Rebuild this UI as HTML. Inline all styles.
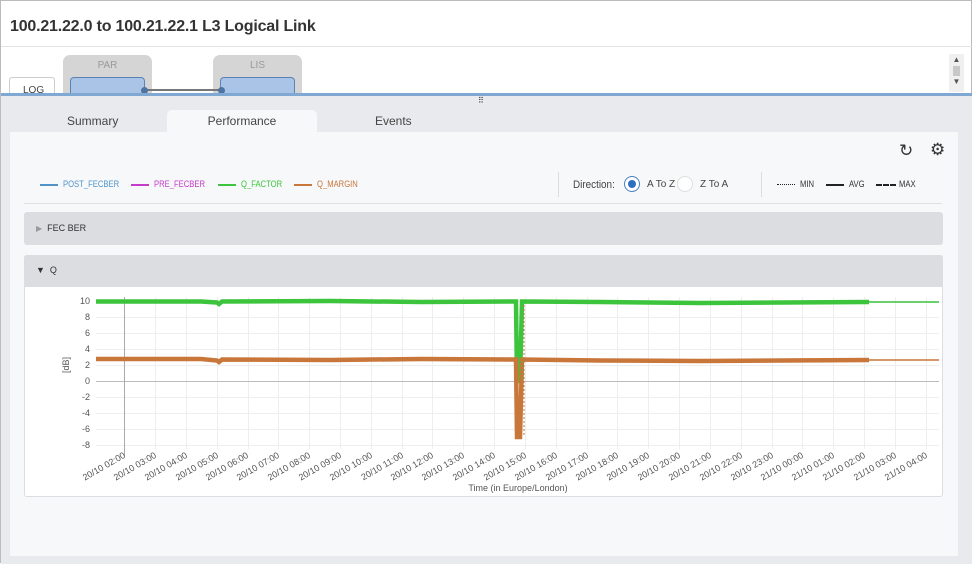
<!DOCTYPE html>
<html><head><meta charset="utf-8"><style>
*{box-sizing:border-box;margin:0;padding:0}
body{width:972px;height:563px;overflow:hidden;font-family:"Liberation Sans",sans-serif;background:#fff;position:relative;border:1px solid #bbb}
.abs{position:absolute}
.title{left:9px;top:17px;font-size:16px;font-weight:bold;color:#333;letter-spacing:-0.2px}
.t{font-size:11px;color:#444}
.lg{font-size:9px;transform:scaleX(0.85);transform-origin:left}
</style></head><body>
<div class="abs title">100.21.22.0 to 100.21.22.1 L3 Logical Link</div>
<div class="abs" style="left:0;top:45px;width:972px;height:1px;background:#e3e3e3"></div>
<!-- topology -->
<div class="abs" style="left:8px;top:76px;width:46px;height:20px;border:1px solid #ccc;border-radius:3px;background:#fff;font-size:10px;color:#444;padding:7px 0 0 13px">LOG</div>
<div class="abs" style="left:62px;top:54px;width:89px;height:40px;background:#d5d5d5;border-radius:7px 7px 0 0;text-align:center;font-size:10px;color:#999;padding-top:5px">PAR</div>
<div class="abs" style="left:69px;top:76px;width:75px;height:20px;background:#a9c4e6;border:1px solid #5b82b5;border-radius:4px"></div>
<div class="abs" style="left:212px;top:54px;width:89px;height:40px;background:#d5d5d5;border-radius:7px 7px 0 0;text-align:center;font-size:10px;color:#999;padding-top:5px">LIS</div>
<div class="abs" style="left:219px;top:76px;width:75px;height:20px;background:#a9c4e6;border:1px solid #5b82b5;border-radius:4px"></div>
<div class="abs" style="left:144px;top:88px;width:76px;height:2px;background:#777"></div>
<div class="abs" style="left:140px;top:86px;width:7px;height:7px;border-radius:50%;background:#4d74a3"></div>
<div class="abs" style="left:217px;top:86px;width:7px;height:7px;border-radius:50%;background:#4d74a3"></div>
<div class="abs" style="left:948px;top:53px;width:15px;height:38px;background:#f0f0f0;font-size:8px;color:#555;text-align:center;line-height:12px">▲<br><span style="display:block;height:10px;background:#c8c8c8;margin:0 4px"></span>▼</div>
<!-- lower area -->
<div class="abs" style="left:0;top:92px;width:972px;height:471px;background:#e9eaed;border-top:3px solid #7fa9d3"></div>
<div class="abs" style="left:477px;top:95px;font-size:8px;color:#333;letter-spacing:-1px">⠿</div>
<div class="abs t" style="left:66px;top:113px;font-size:12px;color:#444">Summary</div>
<div class="abs" style="left:166px;top:109px;width:150px;height:24px;background:#f7f8fa;border-radius:5px 5px 0 0;text-align:center;font-size:12px;color:#444;padding-top:4px">Performance</div>
<div class="abs t" style="left:374px;top:113px;font-size:12px;color:#444">Events</div>
<div class="abs" style="left:9px;top:131px;width:948px;height:424px;background:#f7f8fa"></div>
<!-- icons -->
<div class="abs" style="left:898px;top:140px;font-size:17px;color:#333">↻</div>
<div class="abs" style="left:929px;top:139px;font-size:17px;color:#333">⚙</div>
<!-- legend -->
<div class="abs" style="left:39px;top:183px;width:18px;height:2px;background:#4f93c9"></div><div class="abs lg" style="left:62px;top:178px;color:#4f93c9">POST_FECBER</div>
<div class="abs" style="left:130px;top:183px;width:18px;height:2px;background:#c53cc7"></div><div class="abs lg" style="left:153px;top:178px;color:#c53cc7">PRE_FECBER</div>
<div class="abs" style="left:217px;top:183px;width:18px;height:2px;background:#3ec43e"></div><div class="abs lg" style="left:240px;top:178px;color:#3ec43e">Q_FACTOR</div>
<div class="abs" style="left:293px;top:183px;width:18px;height:2px;background:#c8763a"></div><div class="abs lg" style="left:316px;top:178px;color:#c8763a">Q_MARGIN</div>
<div class="abs" style="left:557px;top:171px;width:1px;height:25px;background:#ddd"></div>
<div class="abs" style="left:572px;top:178px;font-size:11px;color:#444;transform:scaleX(0.9);transform-origin:left">Direction:</div>
<div class="abs" style="left:623px;top:175px;width:16px;height:16px;border-radius:50%;border:1px solid #4a7fc0;background:#fff"><div style="margin:3px;width:8px;height:8px;border-radius:50%;background:#2c6fbf"></div></div>
<div class="abs" style="left:646px;top:178px;font-size:10px;color:#444">A To Z</div>
<div class="abs" style="left:676px;top:175px;width:16px;height:16px;border-radius:50%;border:1px solid #ddd;background:#fff"></div>
<div class="abs" style="left:699px;top:178px;font-size:10px;color:#444">Z To A</div>
<div class="abs" style="left:760px;top:171px;width:1px;height:25px;background:#ddd"></div>
<div class="abs" style="left:776px;top:183px;width:18px;border-top:1px dotted #222"></div><div class="abs lg" style="left:799px;top:178px;color:#333">MIN</div>
<div class="abs" style="left:825px;top:183px;width:18px;height:2px;background:#222"></div><div class="abs lg" style="left:848px;top:178px;color:#333">AVG</div>
<div class="abs" style="left:875px;top:183px;width:20px;border-top:2px dashed #222"></div><div class="abs lg" style="left:898px;top:178px;color:#333">MAX</div>
<div class="abs" style="left:23px;top:202px;width:918px;height:1px;background:#e0e0e0"></div>
<!-- FEC BER -->
<div class="abs" style="left:23px;top:211px;width:919px;height:33px;background:#dcdde1;border-radius:3px;font-size:9px;color:#333;padding:11px 0 0 12px"><span style="color:#999;font-size:8px">▶</span>&nbsp; FEC BER</div>
<!-- Q -->
<div class="abs" style="left:23px;top:254px;width:919px;height:242px;background:#fff;border:1px solid #dcdde1;border-radius:3px"></div>
<div class="abs" style="left:23px;top:254px;width:919px;height:32px;background:#dcdde1;border-radius:3px 3px 0 0;font-size:9px;color:#333;padding:10px 0 0 12px"><span style="font-size:9px">▼</span>&nbsp; Q</div>
<svg class="abs" style="left:0;top:0" width="972" height="563">
<g stroke="#eee" stroke-width="1">
<line x1="95" x2="938" y1="300.5" y2="300.5"/><line x1="95" x2="938" y1="316.5" y2="316.5"/><line x1="95" x2="938" y1="332.5" y2="332.5"/><line x1="95" x2="938" y1="348.5" y2="348.5"/><line x1="95" x2="938" y1="364.5" y2="364.5"/><line x1="95" x2="938" y1="396.5" y2="396.5"/><line x1="95" x2="938" y1="412.5" y2="412.5"/><line x1="95" x2="938" y1="428.5" y2="428.5"/><line x1="95" x2="938" y1="444.5" y2="444.5"/>
<line x1="154.5" x2="154.5" y1="296" y2="448"/><line x1="185.5" x2="185.5" y1="296" y2="448"/><line x1="216.5" x2="216.5" y1="296" y2="448"/><line x1="247.5" x2="247.5" y1="296" y2="448"/><line x1="277.5" x2="277.5" y1="296" y2="448"/><line x1="308.5" x2="308.5" y1="296" y2="448"/><line x1="339.5" x2="339.5" y1="296" y2="448"/><line x1="370.5" x2="370.5" y1="296" y2="448"/><line x1="401.5" x2="401.5" y1="296" y2="448"/><line x1="431.5" x2="431.5" y1="296" y2="448"/><line x1="462.5" x2="462.5" y1="296" y2="448"/><line x1="493.5" x2="493.5" y1="296" y2="448"/><line x1="524.5" x2="524.5" y1="296" y2="448"/><line x1="555.5" x2="555.5" y1="296" y2="448"/><line x1="586.5" x2="586.5" y1="296" y2="448"/><line x1="616.5" x2="616.5" y1="296" y2="448"/><line x1="647.5" x2="647.5" y1="296" y2="448"/><line x1="678.5" x2="678.5" y1="296" y2="448"/><line x1="709.5" x2="709.5" y1="296" y2="448"/><line x1="740.5" x2="740.5" y1="296" y2="448"/><line x1="771.5" x2="771.5" y1="296" y2="448"/><line x1="801.5" x2="801.5" y1="296" y2="448"/><line x1="832.5" x2="832.5" y1="296" y2="448"/><line x1="863.5" x2="863.5" y1="296" y2="448"/><line x1="894.5" x2="894.5" y1="296" y2="448"/><line x1="925.5" x2="925.5" y1="296" y2="448"/>
</g>
<line x1="95" x2="938" y1="380.5" y2="380.5" stroke="#bbb"/>
<line x1="123.5" x2="123.5" y1="296" y2="455" stroke="#aaa"/>
<g font-size="9" fill="#555" text-anchor="end" font-family="Liberation Sans">
<text x="89" y="303">10</text><text x="89" y="319">8</text><text x="89" y="335">6</text><text x="89" y="351">4</text><text x="89" y="367">2</text><text x="89" y="383">0</text><text x="89" y="399">-2</text><text x="89" y="415">-4</text><text x="89" y="431">-6</text><text x="89" y="447">-8</text>
</g>
<text x="68" y="372" font-size="9" fill="#555" transform="rotate(-90 68 372)" font-family="Liberation Sans">[dB]</text>
<polyline fill="none" stroke="#3cc43c" stroke-width="4.5" points="95,300.5 200,300.5 216,301.5 218,303 221,300.5 330,300 420,301 515,300.5 516,380 519,380 521,300.5 600,301 700,302 868,301"/>
<line x1="868" x2="938" y1="301" y2="301" stroke="#3cc43c" stroke-width="1.5"/>
<polyline fill="none" stroke="#c8763a" stroke-width="4.5" points="95,358 200,358 216,359.5 218,361 221,358.5 330,359 420,358 515,358.5 516,436 519,436 521,358.5 600,359.5 700,360 868,359"/>
<line x1="868" x2="938" y1="359" y2="359" stroke="#c8763a" stroke-width="1.5"/>
<line x1="523" x2="523" y1="304" y2="436" stroke="#c8763a" stroke-dasharray="2,2"/>
<line x1="521" x2="521" y1="304" y2="380" stroke="#3cc43c" stroke-dasharray="2,2"/>
<g font-size="9" fill="#555" text-anchor="end" font-family="Liberation Sans">
<text transform="translate(125,456) rotate(-30)">20/10 02:00</text><text transform="translate(156,456) rotate(-30)">20/10 03:00</text><text transform="translate(187,456) rotate(-30)">20/10 04:00</text><text transform="translate(218,456) rotate(-30)">20/10 05:00</text><text transform="translate(248,456) rotate(-30)">20/10 06:00</text><text transform="translate(279,456) rotate(-30)">20/10 07:00</text><text transform="translate(310,456) rotate(-30)">20/10 08:00</text><text transform="translate(341,456) rotate(-30)">20/10 09:00</text><text transform="translate(372,456) rotate(-30)">20/10 10:00</text><text transform="translate(403,456) rotate(-30)">20/10 11:00</text><text transform="translate(433,456) rotate(-30)">20/10 12:00</text><text transform="translate(464,456) rotate(-30)">20/10 13:00</text><text transform="translate(495,456) rotate(-30)">20/10 14:00</text><text transform="translate(526,456) rotate(-30)">20/10 15:00</text><text transform="translate(557,456) rotate(-30)">20/10 16:00</text><text transform="translate(588,456) rotate(-30)">20/10 17:00</text><text transform="translate(618,456) rotate(-30)">20/10 18:00</text><text transform="translate(649,456) rotate(-30)">20/10 19:00</text><text transform="translate(680,456) rotate(-30)">20/10 20:00</text><text transform="translate(711,456) rotate(-30)">20/10 21:00</text><text transform="translate(742,456) rotate(-30)">20/10 22:00</text><text transform="translate(773,456) rotate(-30)">20/10 23:00</text><text transform="translate(803,456) rotate(-30)">21/10 00:00</text><text transform="translate(834,456) rotate(-30)">21/10 01:00</text><text transform="translate(865,456) rotate(-30)">21/10 02:00</text><text transform="translate(896,456) rotate(-30)">21/10 03:00</text><text transform="translate(927,456) rotate(-30)">21/10 04:00</text>
</g>
<text x="517" y="490" font-size="9" fill="#555" text-anchor="middle" font-family="Liberation Sans">Time (in Europe/London)</text>
</svg>
</body></html>
